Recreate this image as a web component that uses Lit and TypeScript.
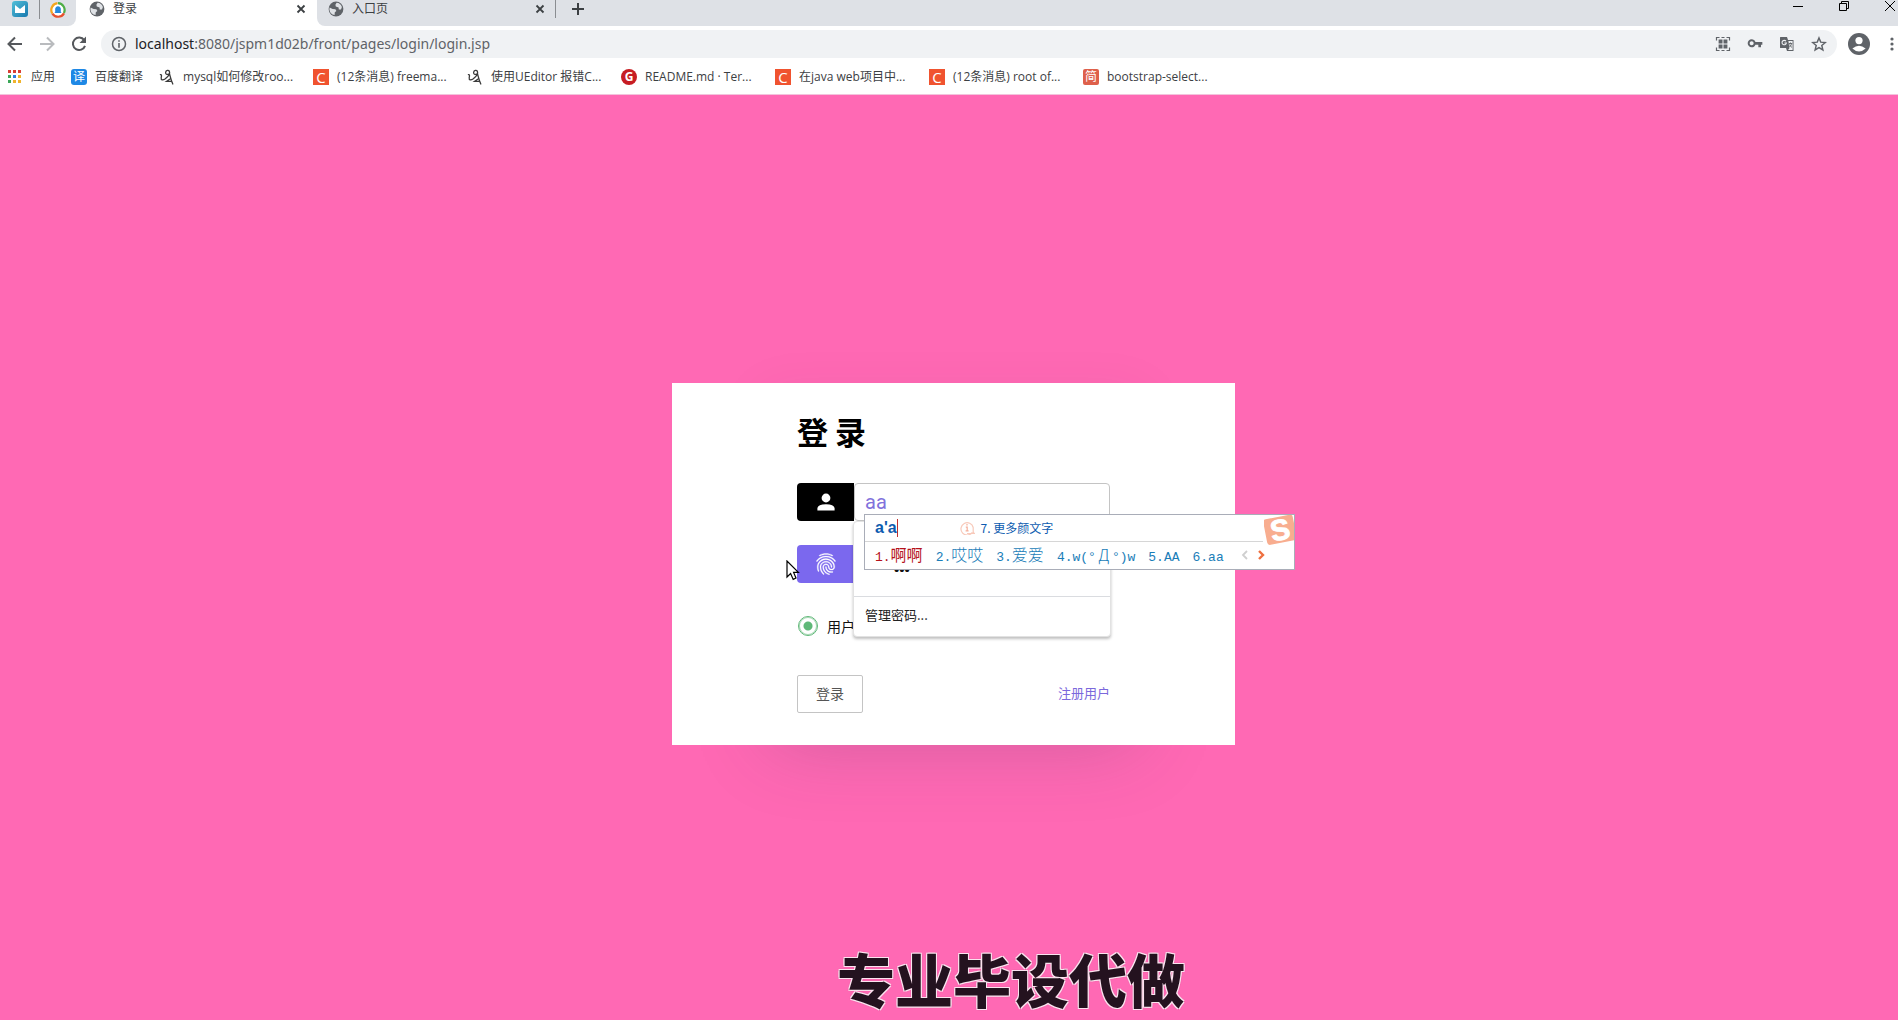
import { LitElement, html, css, svg } from "lit";
import { customElement } from "lit/decorators.js";

const globe = html`<svg class="i16" viewBox="0 0 16 16" aria-hidden="true">
  <circle cx="8" cy="8" r="7.4" fill="#5f6368" />
  <path d="M1.6 6.4 L4.6 8 L7.4 8.2 L8.4 10 L6.8 11.2 L6.6 14 Q2 13 1.4 8.4 Z M8.6 1.8 Q12.6 2 13.9 6 L13 8.6 L10.8 8.4 L10.6 6.4 L7.8 5.6 L7.4 3.8 Z" fill="#dfe2e6" />
</svg>`;
const cross = html`<svg class="i10" viewBox="0 0 10 10" aria-hidden="true"><path d="M1.5 1.5 8.5 8.5M8.5 1.5 1.5 8.5" stroke="#3c4043" stroke-width="1.8" /></svg>`;
const quill = html`<svg class="i16" viewBox="0 0 16 16" aria-hidden="true">
  <path d="M1.4 5.6 C2.8 5.2 2.6 7 2.2 8.6 C1.8 11.4 4 11.4 6 10 C9 7.6 11.4 4.6 10.4 2.4 C9.6 .8 7 1 6.6 3.4 C6.4 5.6 8.6 6.2 10.4 4.4 C11.4 8 12 11.4 13.8 15" fill="none" stroke="#3a3a3a" stroke-width="1.3" stroke-linecap="round" />
  <path d="M11.8 9.4 L7.4 12.4 L12.8 12.4" fill="none" stroke="#3a3a3a" stroke-width="1.2" />
</svg>`;
const appsColors = ["#d93f35", "#d93f35", "#d93f35", "#3aa757", "#2f7de1", "#f0b32c", "#3aa757", "#f0b32c", "#f0b32c"];
const apps = html`<svg class="i16" viewBox="0 0 16 16" aria-hidden="true">
  ${appsColors.map((c, i) => svg`<rect x=${1 + (i % 3) * 5} y=${1 + Math.floor(i / 3) * 5} width="3" height="3" fill=${c} />`)}
</svg>`;

const bookmarks = [
  { icon: html`<span class="fav fav-blue">译</span>`, text: "百度翻译", short: true },
  { icon: quill, text: "mysql如何修改roo..." },
  { icon: html`<span class="fav fav-c">C</span>`, text: "(12条消息) freema..." },
  { icon: quill, text: "使用UEditor 报错C..." },
  { icon: html`<span class="fav fav-g">G</span>`, text: "README.md · Ter..." },
  { icon: html`<span class="fav fav-c">C</span>`, text: "在java web项目中..." },
  { icon: html`<span class="fav fav-c">C</span>`, text: "(12条消息) root of..." },
  { icon: html`<span class="fav fav-j">简</span>`, text: "bootstrap-select..." },
];

const candidates = [
  html`<span class="num">1.</span>啊啊`,
  html`<span class="num">2.</span>哎哎`,
  html`<span class="num">3.</span>爱爱`,
  html`<span class="num">4.w(°</span><span class="wide">Д</span><span class="num">°)w</span>`,
  html`<span class="num">5.AA</span>`,
  html`<span class="num">6.aa</span>`,
];

@customElement("browser-chrome")
class BrowserChrome extends LitElement {
  static styles = css`
    :host { display: block; background: #fff; color: #3c4043; font: 12px/16px "Open Sans", "Noto Sans CJK SC", sans-serif; border-bottom: 1px solid #f3c3dc; }
    button { border: 0; background: none; padding: 0; margin: 0; display: flex; align-items: center; justify-content: center; color: inherit; font: inherit; }
    a { color: inherit; text-decoration: none; }
    svg { display: block; flex: none; }
    .i16 { width: 16px; height: 16px; }
    .i10 { width: 10px; height: 10px; }
    .i20 { width: 20px; height: 20px; }
    .strip { display: flex; height: 26px; background: #fff; }
    .pinned { display: flex; background: #dee1e6; width: 76px; height: 26px; border-bottom-right-radius: 8px; }
    .pin { width: 39px; height: 18px; }
    .pin + .pin { width: 36px; border-left: 1px solid #8a8d91; height: 19px; }
    .tab { display: flex; height: 18px; align-items: center; gap: 8px; padding: 0 11px 0 13px; width: 241px; box-sizing: border-box; }
    .title { flex: 1; }
    .rest { flex: 1; display: flex; background: #dee1e6; border-bottom-left-radius: 8px; }
    .rest .tab { width: 239px; padding: 0 10px 0 11px; border-right: 1px solid #8a8d91; }
    .plus { width: 44px; height: 18px; }
    .window { margin-left: auto; display: flex; height: 12px; gap: 34px; padding-right: 2px; }
    .bar { display: flex; align-items: center; height: 36px; }
    .nav { display: flex; gap: 12px; padding: 0 12px 0 5px; }
    .omni { flex: 1; height: 28px; border-radius: 14px; background: #f0f2f4; display: flex; align-items: center; padding: 0 10px; gap: 8px; }
    .url { flex: 1; min-width: 0; font: 14px/20px "Noto Sans", sans-serif; color: #5f6368; }
    .url b { font-weight: 400; color: #202124; }
    .tools { display: flex; gap: 16px; }
    .avatar { margin: 0 12px 0 11px; }
    .marks { display: flex; align-items: center; height: 30px; padding: 0 0 2px 7px; gap: 16px; white-space: nowrap; }
    .mark { display: flex; align-items: center; gap: 8px; }
    .mark span.label { width: 114px; }
    .mark.short span.label { width: auto; }
    .fav { width: 16px; height: 16px; border-radius: 2px; color: #fff; text-align: center; font: 12px/16px "Open Sans", "Noto Sans CJK SC", sans-serif; }
    .fav-blue { background: #1e88e5; border-radius: 3px; }
    .fav-c { background: #f0532f; border-radius: 0; font-size: 15px; }
    .fav-g { background: #c71d23; border-radius: 50%; font-weight: 700; }
    .fav-j { background: #de604b; }
  `;
  render() {
    return html`
      <div class="strip">
        <div class="pinned">
          <button class="pin" aria-label="邮箱"><svg class="i16" viewBox="0 0 16 16"><defs><linearGradient id="m" x2="1" y2="1"><stop stop-color="#52c0d8" /><stop offset="1" stop-color="#1778ae" /></linearGradient></defs><rect width="16" height="16" rx="3" fill="url(#m)" /><path d="M3 4 8 8 13 4V12H3Z" fill="#fff" /></svg></button>
          <button class="pin" aria-label="导航"><svg class="i16" viewBox="0 0 16 16"><circle cx="8" cy="8" r="6" fill="#fff" /><g fill="none" stroke-width="2.2"><path d="M2.3 11.5 A6.8 6.8 0 0 1 7.5 1.2" stroke="#f5a51d" /><path d="M8 1.2 A6.8 6.8 0 0 1 13.9 11" stroke="#4fae47" /><path d="M14 11.4 A6.8 6.8 0 0 1 2.4 11.6" stroke="#e6502d" /></g><path d="M4.4 11 Q5.6 10.4 5.2 8 A2.9 2.9 0 1 1 10.8 8 Q10.4 10.4 11.6 11 Z" fill="#2387dc" /></svg></button>
        </div>
        <div class="tab">${globe}<span class="title">登录</span><button aria-label="关闭">${cross}</button></div>
        <div class="rest">
          <div class="tab">${globe}<span class="title">入口页</span><button aria-label="关闭">${cross}</button></div>
          <button class="plus" aria-label="新标签页"><svg width="12" height="12" viewBox="0 0 12 12"><path d="M6 0V12M0 6H12" stroke="#3c4043" stroke-width="2" /></svg></button>
          <div class="window">
            <button aria-label="最小化"><svg width="12" height="12" viewBox="0 0 12 12"><path d="M1 6.5H11" stroke="#000" /></svg></button>
            <button aria-label="还原"><svg width="12" height="12" viewBox="0 0 12 12"><path d="M1.5 3.5H8.5V10.5H1.5ZM3.5 3V1.5H10.5V8.5H9" fill="none" stroke="#000" /></svg></button>
            <button aria-label="关闭窗口"><svg width="12" height="12" viewBox="0 0 12 12"><path d="M1 1 11 11M11 1 1 11" stroke="#000" /></svg></button>
          </div>
        </div>
      </div>
      <div class="bar">
        <div class="nav">
          <button aria-label="后退"><svg class="i20" viewBox="0 0 20 20"><path d="M17 10H4M10 3.5 3.5 10 10 16.5" fill="none" stroke="#55585c" stroke-width="2" /></svg></button>
          <button aria-label="前进"><svg class="i20" viewBox="0 0 20 20"><path d="M3 10H16M10 3.5 16.5 10 10 16.5" fill="none" stroke="#b9bbbe" stroke-width="2" /></svg></button>
          <button aria-label="重新加载"><svg class="i20" viewBox="0 0 20 20"><path d="M15.2 6.2A6.2 6.2 0 1 0 16 11.8" fill="none" stroke="#55585c" stroke-width="2" /><path d="M17 2.5V9H10.5Z" fill="#55585c" /></svg></button>
        </div>
        <div class="omni">
          <svg class="i16" viewBox="0 0 16 16"><circle cx="8" cy="8" r="6.5" fill="none" stroke="#5f6368" stroke-width="1.5" /><path d="M8 7V11.8M8 4.2V5.8" stroke="#5f6368" stroke-width="1.6" /></svg>
          <a class="url" href="#"><b>localhost</b>:8080/jspm1d02b/front/pages/login/login.jsp</a>
          <div class="tools">
            <button aria-label="二维码"><svg class="i16" viewBox="0 0 16 16" fill="none" stroke="#5f6368"><path d="M1.5 4.5V1.5H4.5M11.5 1.5H14.5V4.5M14.5 11.5V14.5H11.5M4.5 14.5H1.5V11.5M6.5 1.5H9.5M6.5 14.5H9.5" stroke-width="1.2" /><path d="M3.6 3.6H7.5V7.5H3.6ZM8.5 3.6H12.4V7.5H8.5ZM3.6 8.5H7.5V12.4H3.6ZM8.5 8.5H12.4V12.4H8.5Z" fill="#5f6368" stroke="none" /></svg></button>
            <button aria-label="密码"><svg class="i16" viewBox="0 0 24 24"><path d="M12.65 9C11.83 6.67 9.61 5 7 5c-3.31 0-6 2.69-6 6s2.69 6 6 6c2.61 0 4.83-1.67 5.65-4H17v4h4v-4h2V9H12.65zM7 14c-1.66 0-3-1.34-3-3s1.34-3 3-3 3 1.34 3 3-1.34 3-3 3z" fill="#5f6368" /></svg></button>
            <button aria-label="翻译"><svg class="i16" viewBox="0 0 16 16"><path d="M1.5 1H8L9 4H14.5V15H8L7 12H1.5Q1 12 1 11.5V1.5Q1 1 1.5 1Z" fill="#5f6368" /><path d="M9.4 5H13.6V14H9L10.4 12.2Z" fill="#f0f2f4" /><path d="M7 5.2A2.2 2.2 0 1 0 7.4 7H5.4" fill="none" stroke="#f0f2f4" stroke-width="1.1" /><path d="M9.8 7.5H13.2M11.5 6.5V7.5M12.6 7.5Q12 10 10.4 11M10.5 8.5Q11.4 10.6 13 11.4" fill="none" stroke="#5f6368" stroke-width=".9" /></svg></button>
            <button aria-label="收藏"><svg class="i16" viewBox="0 0 24 24"><path d="M12 3 14.6 9.2 21.4 9.8 16.2 14.2 17.8 20.8 12 17.3 6.2 20.8 7.8 14.2 2.6 9.8 9.4 9.2Z" fill="none" stroke="#5f6368" stroke-width="2.2" /></svg></button>
          </div>
        </div>
        <button class="avatar" aria-label="用户"><svg width="22" height="22" viewBox="0 0 22 22"><circle cx="11" cy="11" r="11" fill="#5f6368" /><circle cx="11" cy="7.6" r="3.6" fill="#fff" /><path d="M4.4 15.4Q11 10.2 17.6 15.4Q11 21.6 4.4 15.4Z" fill="#fff" /></svg></button>
        <button aria-label="菜单"><svg width="16" height="16" viewBox="0 0 16 16" fill="#5f6368"><circle cx="10" cy="3" r="1.6" /><circle cx="10" cy="8" r="1.6" /><circle cx="10" cy="13" r="1.6" /></svg></button>
      </div>
      <nav class="marks">
        <a class="mark short" href="#">${apps}<span class="label">应用</span></a>
        ${bookmarks.map((b) => html`<a class="mark ${b.short ? "short" : ""}" href="#">${b.icon}<span class="label">${b.text}</span></a>`)}
      </nav>
    `;
  }
}

@customElement("ime-panel")
class ImePanel extends LitElement {
  static styles = css`
    :host { display: block; box-sizing: border-box; width: 431px; height: 56px; background: #fff; border: 1px solid #a9adb8; color: #1a7db8; font: 16px/24px "Noto Sans CJK SC", sans-serif; white-space: nowrap; }
    .top { display: flex; align-items: center; height: 26px; margin-right: 31px; padding-left: 10px; border-bottom: 1px solid #d6d6d6; color: #0d5cb0; }
    .typed { font: 700 16px/18px "Liberation Sans", sans-serif; border-right: 1px solid #c03030; }
    .hint { margin-left: 62px; }
    .more { font-size: 12px; margin-left: 5px; }
    .list { display: flex; align-items: baseline; height: 26px; padding-left: 10px; gap: 13px; }
    .item { display: flex; align-items: baseline; font-weight: 300; }
    .item:first-child { color: #b5121b; font-weight: 400; }
    .wide { width: 16px; text-align: center; }
    .num { font: 13px/24px "Liberation Mono", monospace; }
    .pager { display: flex; align-self: center; gap: 6px; margin-left: 3px; }
    .pager button { border: 0; background: none; padding: 0; display: flex; }
    .logo { position: absolute; right: 0; top: 0; width: 30px; height: 30px; }
    svg { display: block; }
  `;
  render() {
    return html`
      <div class="top">
        <span class="typed">a'a</span>
        <svg class="hint" width="16" height="14" viewBox="0 0 16 14"><path d="M12.4 11.2A6.2 6.2 0 1 1 13.2 6.5V10.5Q13.2 12.5 15 12.5H7" fill="none" stroke="#f8cabb" stroke-width="1.2" /><path d="M7 3V4.6M5.8 6.2H7.2V9.6M5.6 9.8H8.6" fill="none" stroke="#f5b09a" stroke-width="1.2" /></svg>
        <span class="more">7. 更多颜文字</span>
      </div>
      <div class="list">
        ${candidates.map((c) => html`<span class="item">${c}</span>`)}
        <span class="pager">
          <button aria-label="上一页"><svg width="10" height="12" viewBox="0 0 10 12"><path d="M7 2 3 6 7 10" fill="none" stroke="#cfcfcf" stroke-width="1.8" /></svg></button>
          <button aria-label="下一页"><svg width="10" height="12" viewBox="0 0 10 12"><path d="M3 2 7 6 3 10" fill="none" stroke="#ee7040" stroke-width="2.4" /></svg></button>
        </span>
      </div>
      <svg class="logo" viewBox="0 0 30 30" aria-hidden="true"><g transform="rotate(-11 15 15)"><rect x="1" y="2" width="30" height="26" rx="3" fill="#f8ad8f" /><text x="16" y="25" text-anchor="middle" font-family="Liberation Sans" font-weight="700" font-size="29" fill="#fff" stroke="#fff">S</text></g></svg>
    `;
  }
}

@customElement("login-card")
class LoginCard extends LitElement {
  static styles = css`
    :host { display: block; box-sizing: border-box; width: 563px; max-width: 100%; background: #fff; padding: 26px 125px 32px; box-shadow: 0 98px 76px -100px rgba(70, 60, 90, 0.25), 0 -80px 50px -90px rgba(90, 60, 90, 0.07); font: 14px/20px "Noto Sans CJK SC", sans-serif; color: #111; }
    h1 { margin: 0 0 30px; font: 700 31px/44px "Liberation Sans", "Noto Sans CJK SC", sans-serif; font-family: "Noto Sans CJK SC", sans-serif; color: #000; }
    svg { display: block; }
    .field { position: relative; display: flex; height: 38px; margin-bottom: 24px; }
    .tag { width: 57px; display: flex; align-items: center; justify-content: center; background: #000; border-radius: 4px 0 0 4px; }
    .purple { background: #7b68ee; }
    .box { flex: 1; min-width: 0; box-sizing: border-box; border: 1px solid #c4c4c4; border-radius: 4px; padding: 0 10px; font: 20px/24px Roboto, sans-serif; color: #8272dc; outline: 0; background: #fff; }
    .drop { position: absolute; z-index: 2; left: 56px; right: -1px; top: 38px; box-sizing: border-box; height: 116px; background: #fff; border: 1px solid #e2e2e2; border-radius: 4px; box-shadow: 0 2px 3px rgba(0, 0, 0, 0.25); font-size: 13px; }
    .saved { box-sizing: border-box; height: 75px; padding: 36px 0 0 40px; border-bottom: 1px solid #dadce0; font: 700 15px/24px "Liberation Sans", sans-serif; }
    .manage { border: 0; background: none; padding: 8px 11px; font: inherit; line-height: 20px; color: #222; }
    .ime { position: absolute; z-index: 3; left: 67px; top: 31px; }
    .pointer { position: absolute; z-index: 3; left: -11px; top: 15px; }
    .role { display: flex; align-items: center; height: 38px; gap: 9px; margin: 0 0 30px; }
    .role input { appearance: none; margin: 0 0 0 1px; width: 20px; height: 20px; border: 1px solid #5fb878; border-radius: 50%; background: radial-gradient(circle, #5fb878 4px, #fff 5px); box-shadow: inset 0 0 0 1px #a9d9b6; }
    .foot { display: flex; justify-content: space-between; align-items: center; }
    .submit { box-sizing: border-box; width: 66px; height: 38px; border: 1px solid #c4c4c4; border-radius: 2px; background: #fff; color: #555; font: inherit; padding: 0 0 2px; }
    .foot a { color: #7b68dc; text-decoration: none; font-size: 13px; padding-bottom: 2px; }
  `;
  render() {
    return html`
      <form @submit=${(e: Event) => e.preventDefault()}>
        <h1>登 录</h1>
        <div class="field">
          <label class="tag" for="user" aria-label="账号"><svg width="18" height="18" viewBox="0 0 18 18" fill="#fff"><circle cx="9" cy="5" r="4.4" /><path d="M0.4 17.4V15Q1 11.2 9 11.2T17.6 15V17.4Z" /></svg></label>
          <input class="box" id="user" type="text" value="aa" autocomplete="off" />
          <div class="drop">
            <div class="saved">•••</div>
            <button class="manage" type="button">管理密码...</button>
          </div>
          <ime-panel class="ime"></ime-panel>
        </div>
        <div class="field">
          <label class="tag purple" for="pass" aria-label="密码"><svg width="20" height="22" viewBox="3.6 1.6 16.8 20.6"><path fill="#fff" stroke="#fff" stroke-width=".3" d="M17.81 4.47c-.08 0-.16-.02-.23-.06C15.66 3.42 14 3 12.01 3c-1.98 0-3.86.47-5.57 1.41-.24.13-.54.04-.68-.2-.13-.24-.04-.55.2-.68C7.82 2.52 9.86 2 12.01 2c2.13 0 3.99.47 6.03 1.52.25.13.34.43.21.67-.09.18-.26.28-.44.28zM3.5 9.72c-.1 0-.2-.03-.29-.09-.23-.16-.28-.47-.12-.7.99-1.4 2.25-2.5 3.75-3.27C9.98 4.04 14 4.03 17.15 5.65c1.5.77 2.76 1.86 3.75 3.25.16.22.11.54-.12.7-.23.16-.54.11-.7-.12-.9-1.26-2.04-2.25-3.39-2.94-2.87-1.47-6.54-1.47-9.4.01-1.36.7-2.5 1.7-3.4 2.96-.08.14-.23.21-.39.21zm6.25 12.07c-.13 0-.26-.05-.35-.15-.87-.87-1.34-1.43-2.01-2.64-.69-1.23-1.05-2.73-1.05-4.34 0-2.97 2.54-5.39 5.66-5.39s5.66 2.42 5.66 5.39c0 .28-.22.5-.5.5s-.5-.22-.5-.5c0-2.42-2.09-4.39-4.66-4.39-2.57 0-4.66 1.97-4.66 4.39 0 1.44.32 2.77.93 3.85.64 1.15 1.08 1.64 1.85 2.42.19.2.19.51 0 .71-.11.1-.24.15-.37.15zm7.17-1.85c-1.19 0-2.24-.3-3.1-.89-1.49-1.01-2.38-2.65-2.38-4.39 0-.28.22-.5.5-.5s.5.22.5.5c0 1.41.72 2.74 1.94 3.56.71.48 1.54.71 2.54.71.24 0 .64-.03 1.04-.1.27-.05.53.13.58.41.05.27-.13.53-.41.58-.57.11-1.07.12-1.21.12zM14.91 22c-.04 0-.09-.01-.13-.02-1.59-.44-2.63-1.03-3.72-2.1-1.4-1.39-2.17-3.24-2.17-5.22 0-1.62 1.38-2.94 3.08-2.94 1.7 0 3.08 1.32 3.08 2.94 0 1.07.93 1.94 2.08 1.94s2.08-.87 2.08-1.94c0-3.77-3.25-6.83-7.25-6.83-2.84 0-5.44 1.58-6.61 4.03-.39.81-.59 1.76-.59 2.8 0 .78.07 2.01.67 3.61.1.26-.03.55-.29.64-.26.1-.55-.04-.64-.29-.49-1.31-.73-2.61-.73-3.96 0-1.2.23-2.29.68-3.24 1.33-2.79 4.28-4.6 7.51-4.6 4.55 0 8.25 3.51 8.25 7.83 0 1.62-1.38 2.94-3.08 2.94s-3.08-1.32-3.08-2.94c0-1.07-.93-1.94-2.08-1.94s-2.08.87-2.08 1.94c0 1.71.66 3.31 1.87 4.51.95.94 1.86 1.46 3.27 1.85.27.07.42.35.35.61-.05.23-.26.38-.47.38z" /></svg></label>
          <input class="box" id="pass" type="password" autocomplete="off" />
          <svg class="pointer" width="14" height="21" viewBox="0 0 14 21"><path d="M1 1V17L4.6 13.6 7.2 19.4 10 18 7.6 12.4H12.4Z" fill="#fff" stroke="#000" stroke-width="1.2" /></svg>
        </div>
        <div class="role"><input id="role" type="radio" name="role" checked /><label for="role">用户</label></div>
        <div class="foot"><button class="submit" type="submit">登录</button><a href="#">注册用户</a></div>
      </form>
    `;
  }
}

@customElement("app-root")
class AppRoot extends LitElement {
  static styles = css`
    :host { display: flex; flex-direction: column; min-height: 100vh; background: #ff69b4; }
    main { position: relative; flex: 1; display: flex; align-items: center; justify-content: center; padding: 13px 0 0 9px; box-sizing: border-box; }
    browser-chrome { height: 94px; }
    .caption { position: absolute; left: 0; right: 0; bottom: 10px; margin: 0; padding-left: 124px; text-align: center; font: 900 58px/64px "Noto Sans CJK SC", sans-serif; color: #24121f; text-shadow: 1px 1px 0 #fbe3ef, -1px -1px 0 #fbe3ef, 1px -1px 0 #fbe3ef, -1px 1px 0 #fbe3ef, 0 0 2px #8a3a66; }
  `;
  render() {
    return html`
      <browser-chrome></browser-chrome>
      <main>
        <login-card></login-card>
        <p class="caption">专业毕设代做</p>
      </main>
    `;
  }
}
